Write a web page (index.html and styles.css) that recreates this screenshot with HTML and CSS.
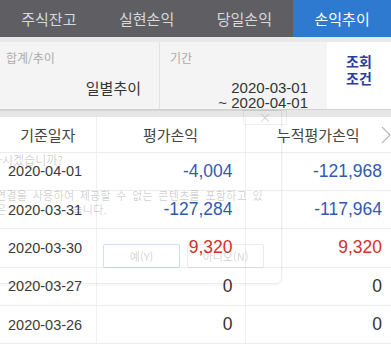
FILE: index.html
```html
<!DOCTYPE html>
<html lang="ko">
<head>
  <meta charset="UTF-8" />
  <meta name="viewport" content="width=device-width, initial-scale=1.0"/>
  <title>손익추이</title>
  <link rel="stylesheet" href="styles.css">
</head>
<body>
  <div class="app">
    <nav class="tabs">
      <button class="tab">주식잔고</button>
      <button class="tab">실현손익</button>
      <button class="tab">당일손익</button>
      <button class="tab active">손익추이</button>
    </nav>

    <section class="cond">
      <div class="cond-cell sum">
        <span class="label">합계/추이</span>
        <span class="value">일별추이</span>
      </div>
      <div class="cond-cell period">
        <span class="label">기간</span>
        <span class="value">2020-03-01<br>~ 2020-04-01</span>
      </div>
      <button class="search">조회<br>조건</button>
    </section>

    <div class="band"></div>

    <table class="grid">
      <thead>
        <tr>
          <th>기준일자</th>
          <th>평가손익</th>
          <th>누적평가손익</th>
        </tr>
      </thead>
      <tbody>
        <tr>
          <td class="date">2020-04-01</td>
          <td class="num minus">-4,004</td>
          <td class="num minus">-121,968</td>
        </tr>
        <tr>
          <td class="date">2020-03-31</td>
          <td class="num minus">-127,284</td>
          <td class="num minus">-117,964</td>
        </tr>
        <tr>
          <td class="date">2020-03-30</td>
          <td class="num plus">9,320</td>
          <td class="num plus">9,320</td>
        </tr>
        <tr>
          <td class="date">2020-03-27</td>
          <td class="num">0</td>
          <td class="num">0</td>
        </tr>
        <tr>
          <td class="date">2020-03-26</td>
          <td class="num">0</td>
          <td class="num">0</td>
        </tr>
      </tbody>
    </table>

    <svg class="more" width="12" height="20" viewBox="0 0 12 20">
      <path d="M2 2 L10 10 L2 18" fill="none" stroke="#b8b8b8" stroke-width="1.2"/>
    </svg>

    <!-- fading system dialog left over the page -->
    <div class="ghost">
      <span class="ghost-close">×</span>
      <p class="ghost-q">하시겠습니까?</p>
      <p class="ghost-msg">연결을 사용하여 제공할 수 없는 콘텐츠를 포함하고 있<br>은<span class="ghost-gap"></span>습니다.</p>
      <div class="ghost-btns">
        <span class="ghost-btn yes">예(Y)</span>
        <span class="ghost-btn">아니오(N)</span>
      </div>
    </div>
  </div>
</body>
</html>
```

FILE: styles.css
```css
* {
  box-sizing: border-box;
}
body {
  margin: 0;
  background: #fff;
  font-family: "Liberation Sans", "Noto Sans CJK KR", sans-serif;
  color: #333;
}
.app {
  position: relative;
  width: 391px;
  height: 363px;
  overflow: hidden;
}
.tabs {
  display: grid;
  grid-template-columns: repeat(4, 1fr);
  height: 37px;
  background: #5f5e63;
  border-bottom: 5px solid #e9e9e9;
  box-sizing: content-box;
}
.tab {
  border: none;
  background: none;
  color: #d9d9d9;
  font-family: "Noto Sans CJK KR", sans-serif;
  font-size: 15px;
  padding: 0;
}
.tab.active {
  background: #2d7ad0;
  color: #fff;
}
.cond {
  display: flex;
  height: 67px;
  background: #f4f4f4;
  overflow: hidden;
}
.cond-cell {
  display: flex;
  flex-direction: column;
  padding: 8px 18px 0 6px;
}
.cond-cell.sum {
  width: 160px;
  border-right: 1px solid #e2e2e2;
}
.cond-cell.period {
  width: 167px;
  padding-left: 10px;
  padding-right: 19px;
}
.label {
  font-family: "Noto Sans CJK KR", sans-serif;
  font-size: 12px;
  color: #ababab;
  line-height: 16px;
}
.value {
  align-self: flex-end;
  text-align: right;
  font-size: 15px;
  line-height: 15px;
  color: #333;
  margin-top: 14px;
}
.sum .value {
  font-family: "Noto Sans CJK KR", sans-serif;
}
.search {
  flex: 1;
  border: none;
  background: #fff;
  color: #2b3d9e;
  font-family: "Noto Sans CJK KR", sans-serif;
  font-weight: bold;
  font-size: 14px;
  line-height: 17px;
  padding: 0 0 12px;
}
.band {
  height: 8px;
  background: #e6e6e6;
  border-top: 1px solid #d2d2d2;
}
.grid {
  width: 391px;
  border-collapse: collapse;
  table-layout: fixed;
}
.grid th,
.grid td {
  border-bottom: 1px solid #ececec;
  border-left: 1px solid #f0f0f0;
  padding: 0;
}
.grid th:first-child,
.grid td:first-child {
  width: 96px;
  border-left: none;
}
.grid th:nth-child(2) {
  width: 149px;
}
.grid th {
  height: 35px;
  font-family: "Noto Sans CJK KR", sans-serif;
  font-weight: normal;
  font-size: 15px;
  color: #444;
}
.grid td {
  height: 38.4px;
}
.date {
  font-size: 14.5px;
  color: #3a3a3a;
  padding-left: 8px !important;
}
.num {
  text-align: right;
  font-size: 17.5px;
  color: #333;
  padding-right: 12px !important;
}
.num:last-child {
  padding-right: 9px !important;
}
.minus {
  color: #2f5bb0;
}
.plus {
  color: #d3302b;
}
.more {
  position: absolute;
  left: 380px;
  top: 125px;
}
.ghost {
  position: absolute;
  left: -20px;
  top: 110px;
  width: 302px;
  height: 174px;
  border: 1px solid rgba(0, 0, 0, 0.07);
  border-radius: 0 0 6px 0;
  box-shadow: 0 1px 3px rgba(0, 0, 0, 0.05);
  font-family: "Noto Sans CJK KR", sans-serif;
  color: rgba(0, 0, 0, 0.2);
}
.ghost-close {
  position: absolute;
  right: -6px;
  top: -1px;
  width: 44px;
  height: 15px;
  border: 1px solid rgba(0, 0, 0, 0.06);
  text-align: center;
  font-size: 13px;
  line-height: 12px;
}
.ghost p {
  margin: 0;
  font-size: 12px;
  white-space: nowrap;
}
.ghost-q {
  padding: 41px 0 0 10px;
  line-height: 16px;
}
.ghost-msg {
  padding: 20px 0 0 15px;
  line-height: 14px;
  font-size: 11px !important;
  letter-spacing: 0.3px;
  word-spacing: 2px;
}
.ghost-gap {
  display: inline-block;
  width: 66px;
}
.ghost-btns {
  display: flex;
  justify-content: flex-end;
  gap: 7px;
  padding: 28px 17px 0 0;
}
.ghost-btn {
  width: 77px;
  height: 24px;
  border: 1px solid rgba(0, 0, 0, 0.08);
  border-radius: 2px;
  text-align: center;
  font-size: 11px;
  line-height: 22px;
}
.ghost-btn.yes {
  border-color: rgba(90, 160, 220, 0.3);
}
```
